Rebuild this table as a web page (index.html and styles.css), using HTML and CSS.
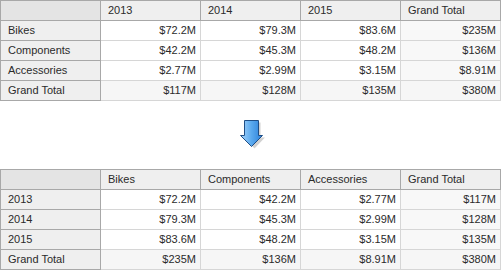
FILE: index.html
```html
<!DOCTYPE html>
<html>
<head>
<meta charset="utf-8">
<link rel="stylesheet" href="styles.css">
</head>
<body>
<table class="pivot">
  <colgroup><col class="c"><col class="c"><col class="c"><col class="c"><col class="c"></colgroup>
  <tr class="hdr"><th class="corner"></th><th>2013</th><th>2014</th><th>2015</th><th>Grand Total</th></tr>
  <tr><th class="rh">Bikes</th><td>$72.2M</td><td>$79.3M</td><td>$83.6M</td><td class="gt">$235M</td></tr>
  <tr><th class="rh">Components</th><td>$42.2M</td><td>$45.3M</td><td>$48.2M</td><td class="gt">$136M</td></tr>
  <tr><th class="rh">Accessories</th><td>$2.77M</td><td>$2.99M</td><td>$3.15M</td><td class="gt">$8.91M</td></tr>
  <tr class="total"><th class="rh">Grand Total</th><td>$117M</td><td>$128M</td><td>$135M</td><td class="gt">$380M</td></tr>
</table>
<div class="arrow-wrap">
  <svg class="arrow" width="28" height="34" viewBox="0 0 28 34">
    <defs>
      <linearGradient id="ag" x1="0" y1="0" x2="1" y2="0">
        <stop offset="0" stop-color="#a6d4fb"/>
        <stop offset="0.5" stop-color="#5aa9ee"/>
        <stop offset="1" stop-color="#2a7fd9"/>
      </linearGradient>
    </defs>
    <path d="M8.5 4.5 H22.5 V19.5 H27 L16.5 30.5 L6 19.5 H8.5 Z" fill="#000" opacity="0.18"/>
    <path d="M6.5 2.5 H20.5 V17.5 H24.5 L13.5 28.5 L2.5 17.5 H6.5 Z" fill="url(#ag)" stroke="#1f4e86" stroke-width="1"/>
  </svg>
</div>
<table class="pivot">
  <colgroup><col class="c"><col class="c"><col class="c"><col class="c"><col class="c"></colgroup>
  <tr class="hdr"><th class="corner"></th><th>Bikes</th><th>Components</th><th>Accessories</th><th>Grand Total</th></tr>
  <tr><th class="rh">2013</th><td>$72.2M</td><td>$42.2M</td><td>$2.77M</td><td class="gt">$117M</td></tr>
  <tr><th class="rh">2014</th><td>$79.3M</td><td>$45.3M</td><td>$2.99M</td><td class="gt">$128M</td></tr>
  <tr><th class="rh">2015</th><td>$83.6M</td><td>$48.2M</td><td>$3.15M</td><td class="gt">$135M</td></tr>
  <tr class="total"><th class="rh">Grand Total</th><td>$235M</td><td>$136M</td><td>$8.91M</td><td class="gt">$380M</td></tr>
</table>
</body>
</html>
```
FILE: styles.css
```css
html, body {
  margin: 0;
  padding: 0;
  background: #ffffff;
}
body {
  font-family: "Liberation Sans", Arial, sans-serif;
  font-size: 11px;
  color: #2b2b2b;
}
.pivot {
  border-collapse: collapse;
  table-layout: fixed;
  width: 501px;
  border: 1px solid #a0a0a0;
}
.pivot .c {
  width: 100px;
}
.pivot th, .pivot td {
  height: 19px;
  padding: 0 4px 0 7px;
  font-weight: normal;
  white-space: nowrap;
  overflow: hidden;
  line-height: 19px;
}
.pivot td {
  text-align: right;
  border: 1px solid #d6d6d6;
  background: #ffffff;
}
.pivot th {
  text-align: left;
  background: #eeeeee;
  border: 1px solid #a8a8a8;
}
.pivot .hdr th {
  background: #efefef;
}
.pivot .hdr th.corner {
  background: #e4e4e4;
}
.pivot th.rh {
  background: #efefef;
}
.pivot td.gt {
  background: #f8f8f8;
}
.pivot .total td {
  background: #f6f6f6;
}
.arrow-wrap {
  height: 68px;
  position: relative;
}
.arrow {
  position: absolute;
  left: 238px;
  top: 17px;
}
```
